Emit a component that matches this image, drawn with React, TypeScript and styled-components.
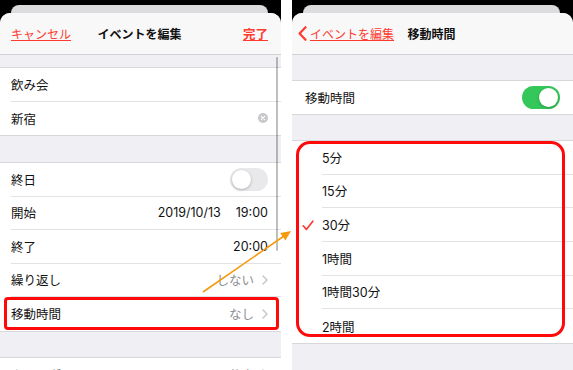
import React from "react";
import styled, { createGlobalStyle } from "styled-components";

const Global = createGlobalStyle`
  body {
    margin: 0;
    font-family: "Inter", "Noto Sans CJK JP", sans-serif;
    -webkit-font-smoothing: antialiased;
  }
`;

const Page = styled.div`
  position: relative;
  display: flex;
  gap: 11px;
  width: 573px;
  height: 370px;
  overflow: hidden;
  background: #fff;
`;

const Screen = styled.div`
  flex: none;
  width: 281px;
  display: flex;
  flex-direction: column;
  padding-top: 5px;
  box-sizing: border-box;
  background: #000;
`;

const BackCard = styled.div`
  height: 8px;
  margin: 0 13px 0 11px;
  background: #dcdcde;
  border-radius: 8px 8px 0 0;
`;

const Sheet = styled.div`
  position: relative;
  flex: 1;
  background: #efeff4;
  border-radius: 10px 10px 0 0;
  overflow: hidden;
`;

const NavBar = styled.div`
  height: 42px;
  box-sizing: border-box;
  display: grid;
  grid-template-columns: 1fr auto 1fr;
  align-items: center;
  padding: 0 13px 0 11px;
  background: #f8f8f9;
  border-bottom: 1px solid #d2d2d6;
  font-size: 12px;
`;

const NavLink = styled.a<{ $bold?: boolean; $end?: boolean }>`
  display: flex;
  align-items: center;
  justify-self: ${(p) => (p.$end ? "end" : "start")};
  color: #ff3b30;
  text-decoration: underline;
  font-size: ${(p) => (p.$bold ? "12.5px" : "12px")};
  font-weight: ${(p) => (p.$bold ? 700 : 400)};
  white-space: nowrap;
`;

const BackLink = styled(NavLink)`
  margin-left: -5px;
  gap: 3px;
`;

const NavTitle = styled.div`
  font-weight: 700;
  color: #111;
  white-space: nowrap;
`;

const Spacer = styled.div<{ $h: number }>`
  height: ${(p) => p.$h}px;
`;

const Group = styled.div`
  background: #fff;
  border-top: 1px solid #d8d8dc;
  border-bottom: 1px solid #d8d8dc;
`;

const Row = styled.div<{ $h: number; $inset: number }>`
  display: flex;
  height: ${(p) => p.$h}px;
  padding-left: ${(p) => p.$inset}px;
  box-sizing: border-box;
  &:last-child > div:last-child {
    border-bottom: none;
  }
`;

const CheckSlot = styled.div`
  flex: none;
  width: 30px;
  margin-left: -30px;
  display: flex;
  align-items: center;
  padding-left: 10px;
  box-sizing: border-box;
`;

const RowBody = styled.div`
  flex: 1;
  display: flex;
  align-items: center;
  justify-content: space-between;
  padding-right: 13px;
  border-bottom: 1px solid #e2e2e6;
  font-size: 12.5px;
  color: #111;
  white-space: nowrap;
`;

const Values = styled.div`
  display: flex;
  align-items: center;
  gap: 15px;
`;

const Muted = styled.span`
  color: #8e8e93;
`;

const Detail = styled.div`
  display: flex;
  align-items: center;
  gap: 8px;
`;

const Toggle = styled.div<{ $on?: boolean }>`
  position: relative;
  width: 38px;
  height: 23px;
  border-radius: 12px;
  background: ${(p) => (p.$on ? "#34c759" : "#e9e9eb")};
  &::after {
    content: "";
    position: absolute;
    top: 2px;
    left: ${(p) => (p.$on ? "17px" : "2px")};
    width: 19px;
    height: 19px;
    border-radius: 50%;
    background: #fff;
    box-shadow: 0 1px 3px rgba(0, 0, 0, 0.25);
  }
`;

const ScrollIndicator = styled.div`
  position: absolute;
  right: 3px;
  top: 44px;
  width: 2px;
  height: 194px;
  border-radius: 1px;
  background: rgba(0, 0, 0, 0.25);
`;

const Highlight = styled.div<{ $x: number; $y: number; $w: number; $h: number; $r: number }>`
  position: absolute;
  left: ${(p) => p.$x}px;
  top: ${(p) => p.$y}px;
  width: ${(p) => p.$w}px;
  height: ${(p) => p.$h}px;
  box-sizing: border-box;
  border: 3px solid #ff0a0a;
  border-radius: ${(p) => p.$r}px;
  pointer-events: none;
`;

const Overlay = styled.svg`
  position: absolute;
  left: 0;
  top: 0;
  pointer-events: none;
`;

const Chevron = () => (
  <svg width="6" height="10" viewBox="0 0 6 10">
    <path d="M1 1 L5 5 L1 9" fill="none" stroke="#c4c4c8" strokeWidth="1.4" strokeLinecap="round" strokeLinejoin="round" />
  </svg>
);

const BackChevron = () => (
  <svg width="9" height="15" viewBox="0 0 9 15">
    <path d="M7.5 1.2 L1.6 7.5 L7.5 13.8" fill="none" stroke="#ff3b30" strokeWidth="2.2" strokeLinecap="round" strokeLinejoin="round" />
  </svg>
);

const ClearButton = () => (
  <svg width="10" height="10" viewBox="0 0 10 10">
    <circle cx="5" cy="5" r="5" fill="#c7c7cc" />
    <path d="M3.3 3.3 L6.7 6.7 M6.7 3.3 L3.3 6.7" stroke="#fff" strokeWidth="1.2" strokeLinecap="round" />
  </svg>
);

const Check = () => (
  <svg width="12" height="11" viewBox="0 0 12 11">
    <path d="M1.2 5.8 L4.4 9.4 L10.8 1.2" fill="none" stroke="#ff3b30" strokeWidth="1.7" strokeLinecap="round" strokeLinejoin="round" />
  </svg>
);

const LH = 33.5;
const RH = 33.67;

const durations = ["5分", "15分", "30分", "1時間", "1時間30分", "2時間"];

const EditScreen = () => (
  <Screen>
    <BackCard />
    <Sheet>
      <NavBar>
        <NavLink>キャンセル</NavLink>
        <NavTitle>イベントを編集</NavTitle>
        <NavLink $bold $end>完了</NavLink>
      </NavBar>
      <Spacer $h={12} />
      <Group>
        <Row $h={LH} $inset={11}>
          <RowBody>飲み会</RowBody>
        </Row>
        <Row $h={LH} $inset={11}>
          <RowBody>
            新宿
            <ClearButton />
          </RowBody>
        </Row>
      </Group>
      <Spacer $h={26} />
      <Group>
        <Row $h={LH} $inset={11}>
          <RowBody>
            終日
            <Toggle />
          </RowBody>
        </Row>
        <Row $h={LH} $inset={11}>
          <RowBody>
            開始
            <Values>
              <span>2019/10/13</span>
              <span>19:00</span>
            </Values>
          </RowBody>
        </Row>
        <Row $h={LH} $inset={11}>
          <RowBody>
            終了
            <span>20:00</span>
          </RowBody>
        </Row>
        <Row $h={LH} $inset={11}>
          <RowBody>
            繰り返し
            <Detail>
              <Muted>しない</Muted>
              <Chevron />
            </Detail>
          </RowBody>
        </Row>
        <Row $h={LH} $inset={11}>
          <RowBody>
            移動時間
            <Detail>
              <Muted>なし</Muted>
              <Chevron />
            </Detail>
          </RowBody>
        </Row>
      </Group>
      <Spacer $h={25} />
      <Group>
        <Row $h={LH} $inset={11}>
          <RowBody>
            カレンダー
            <Detail>
              <Muted>仕事</Muted>
              <Chevron />
            </Detail>
          </RowBody>
        </Row>
      </Group>
      <ScrollIndicator />
    </Sheet>
  </Screen>
);

const TravelScreen = () => (
  <Screen>
    <BackCard />
    <Sheet>
      <NavBar>
        <BackLink>
          <BackChevron />
          イベントを編集
        </BackLink>
        <NavTitle>移動時間</NavTitle>
        <span />
      </NavBar>
      <Spacer $h={25} />
      <Group>
        <Row $h={33} $inset={13}>
          <RowBody>
            移動時間
            <Toggle $on />
          </RowBody>
        </Row>
      </Group>
      <Spacer $h={25} />
      <Group>
        {durations.map((d) => (
          <Row key={d} $h={RH} $inset={30}>
            <CheckSlot>{d === "30分" && <Check />}</CheckSlot>
            <RowBody>{d}</RowBody>
          </Row>
        ))}
      </Group>
    </Sheet>
  </Screen>
);

export default function App() {
  return (
    <>
      <Global />
      <Page>
        <EditScreen />
        <TravelScreen />
        <Highlight $x={4} $y={297} $w={275} $h={33} $r={4} />
        <Highlight $x={296} $y={141} $w={269} $h={196} $r={14} />
        <Overlay width="573" height="370" viewBox="0 0 573 370">
          <line x1="203" y1="292" x2="284" y2="236" stroke="#f59a0e" strokeWidth="1.6" />
          <polygon points="291,231 285.4,240.4 280.2,233" fill="#f59a0e" />
        </Overlay>
      </Page>
    </>
  );
}
